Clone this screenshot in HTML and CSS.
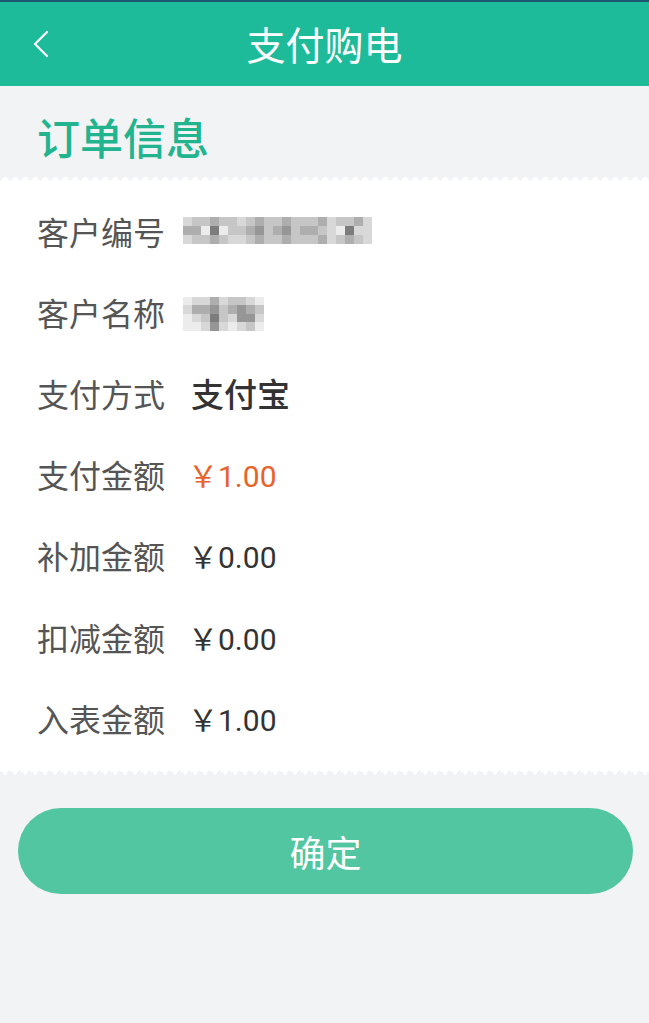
FILE: index.html
```html
<!DOCTYPE html>
<html lang="zh-CN">
<head>
<meta charset="utf-8">
<title>支付购电</title>
<link rel="stylesheet" href="styles.css">
</head>
<body>
<div class="statusline"></div>
<header class="topbar">
  <span class="back" aria-label="返回">
    <svg width="16" height="28" viewBox="0 0 16 28"><path d="M14 2 L2 14 L14 26" fill="none" stroke="#fff" stroke-width="2.2" stroke-linecap="round" stroke-linejoin="round"/></svg>
  </span>
  <h1 class="title">支付购电</h1>
</header>

<h2 class="section-title">订单信息</h2>

<section class="card">
  <div class="zig zig-top"></div>
  <div class="rows">
    <div class="row">
      <span class="label">客户编号</span>
      <div class="mosaic mosaic-id">
        <i class="m1"></i><i class="m2"></i><i class="m2"></i><i class="m3"></i><i class="m2"></i><i class="m2"></i><i class="m1"></i><i class="m2"></i><i class="m3"></i><i class="m2"></i><i class="m2"></i><i class="m3"></i><i class="m2"></i><i class="m2"></i><i class="m2"></i><i class="m3"></i><i class="m1"></i><i class="m2"></i><i class="m2"></i><i class="m3"></i><i class="m1"></i>
        <i class="m3"></i><i class="m3"></i><i class="m0"></i><i class="m5"></i><i class="m0"></i><i class="m2"></i><i class="m2"></i><i class="m3"></i><i class="m4"></i><i class="m2"></i><i class="m3"></i><i class="m4"></i><i class="m2"></i><i class="m3"></i><i class="m3"></i><i class="m2"></i><i class="m1"></i><i class="m0"></i><i class="m5"></i><i class="m1"></i><i class="m1"></i>
        <i class="m1"></i><i class="m2"></i><i class="m2"></i><i class="m3"></i><i class="m2"></i><i class="m1"></i><i class="m1"></i><i class="m2"></i><i class="m3"></i><i class="m2"></i><i class="m2"></i><i class="m3"></i><i class="m2"></i><i class="m2"></i><i class="m2"></i><i class="m3"></i><i class="m1"></i><i class="m2"></i><i class="m3"></i><i class="m2"></i><i class="m1"></i>
      </div>
    </div>
    <div class="row">
      <span class="label">客户名称</span>
      <div class="mosaic mosaic-name">
        <i class="m0"></i><i class="m1"></i><i class="m1"></i><i class="m3"></i><i class="m1"></i><i class="m2"></i><i class="m2"></i><i class="m1"></i><i class="m0"></i>
        <i class="m1"></i><i class="m3"></i><i class="m3"></i><i class="m4"></i><i class="m2"></i><i class="m3"></i><i class="m4"></i><i class="m3"></i><i class="m2"></i>
        <i class="m0"></i><i class="m1"></i><i class="m2"></i><i class="m5"></i><i class="m2"></i><i class="m1"></i><i class="m4"></i><i class="m4"></i><i class="m1"></i>
        <i class="m0"></i><i class="m0"></i><i class="m1"></i><i class="m4"></i><i class="m1"></i><i class="m0"></i><i class="m1"></i><i class="m2"></i><i class="m0"></i>
      </div>
    </div>
    <div class="row">
      <span class="label">支付方式</span>
      <span class="value value-strong">支付宝</span>
    </div>
    <div class="row">
      <span class="label">支付金额</span>
      <span class="value value-accent">￥1.00</span>
    </div>
    <div class="row">
      <span class="label">补加金额</span>
      <span class="value">￥0.00</span>
    </div>
    <div class="row">
      <span class="label">扣减金额</span>
      <span class="value">￥0.00</span>
    </div>
    <div class="row">
      <span class="label">入表金额</span>
      <span class="value">￥1.00</span>
    </div>
  </div>
  <div class="zig zig-bottom"></div>
</section>

<div class="actions">
  <button class="confirm" type="button">确定</button>
</div>
</body>
</html>
```

FILE: styles.css
```css
html, body {
  margin: 0;
  padding: 0;
}
body {
  background: #f2f3f5;
  font-family: "Noto Sans CJK SC", "Noto Sans", sans-serif;
  width: 649px;
  min-height: 1023px;
}
.statusline {
  height: 2px;
  background: #1b5673;
}
.topbar {
  height: 84px;
  background: #1ebb9b;
  display: flex;
  align-items: center;
  justify-content: center;
  position: relative;
}
.back {
  position: absolute;
  left: 33px;
  top: 28px;
  width: 16px;
  height: 28px;
  display: flex;
}
.title {
  margin: 0;
  color: #fff;
  font-size: 39px;
  font-weight: 400;
  line-height: 1;
  transform: translateY(-1px);
}
.section-title {
  margin: 0;
  height: 90px;
  box-sizing: border-box;
  padding: 29px 0 0 37px;
  color: #21b48f;
  font-size: 43px;
  font-weight: 500;
  line-height: 1;
}
.card {
  background: #fff;
  display: flex;
  flex-direction: column;
}
.zig {
  height: 5px;
  background-size: 10px 5px;
  background-repeat: repeat-x;
  background-color: #f2f3f5;
}
.zig-top {
  background-image: conic-gradient(from 135deg at 50% 0, #fff 90deg, transparent 0);
}
.zig-bottom {
  background-image: conic-gradient(from -45deg at 50% 100%, #fff 90deg, transparent 0);
}
.rows {
  padding: 9px 0 12px 37px;
  display: flex;
  flex-direction: column;
}
.row {
  height: 81.2px;
  display: flex;
  align-items: center;
}
.label {
  width: 151px;
  flex: none;
  color: #555;
  font-size: 32px;
  line-height: 1;
}
.value {
  color: #333;
  font-family: "Roboto", "Noto Sans CJK SC", sans-serif;
  font-size: 30px;
  line-height: 1;
  padding-top: 6px;
}
.value-strong {
  font-family: "Noto Sans CJK SC", sans-serif;
  font-size: 33px;
  font-weight: 500;
  color: #333;
  margin-left: 3px;
  padding-top: 2px;
}
.value-accent {
  color: #e8622c;
}
.mosaic {
  display: grid;
  filter: blur(0.6px);
}
.mosaic-id {
  grid-template-columns: repeat(21, 9px);
  grid-auto-rows: 9px;
  margin-left: -5px;
}
.mosaic-name {
  grid-template-columns: repeat(9, 9px);
  grid-auto-rows: 8.5px;
  margin-left: -5px;
  transform: translateY(2px);
}
.mosaic i { display: block; }
.m0 { background: #ececec; }
.m1 { background: #d8d8d8; }
.m2 { background: #c6c6c6; }
.m3 { background: #aeaeae; }
.m4 { background: #969696; }
.m5 { background: #7c7c7c; }
.actions {
  padding: 33px 16px 0 18px;
}
.confirm {
  width: 615px;
  height: 86px;
  border: 0;
  border-radius: 43px;
  background: #51c6a0;
  color: #fff;
  font-family: "Noto Sans CJK SC", "Noto Sans", sans-serif;
  font-size: 36px;
  font-weight: 400;
  line-height: 1;
  display: flex;
  align-items: center;
  justify-content: center;
  padding: 0;
}
```
